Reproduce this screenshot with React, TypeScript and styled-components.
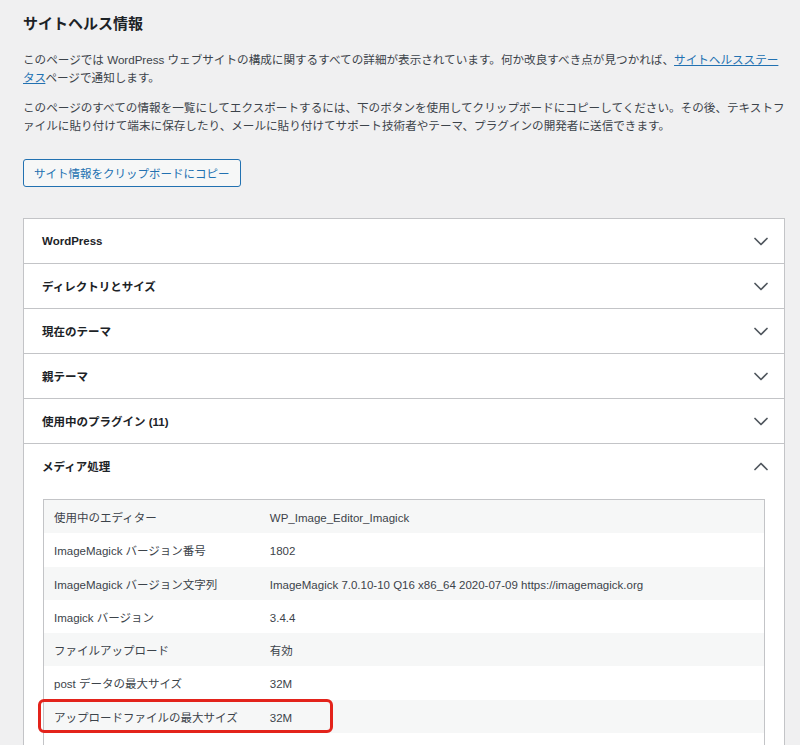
import React from "react";
import styled, { createGlobalStyle } from "styled-components";

const GlobalStyle = createGlobalStyle`
html, body {
  margin: 0;
  padding: 0;
  background: #f0f0f1;
}
body {
  font-family: "Liberation Sans", "Noto Sans CJK JP", sans-serif;
  color: #3c434a;
  font-size: 11.5px;
}
`;

const Page = styled.div`
padding: 14px 15px 0 23px;
box-sizing: border-box;
overflow: hidden;
height: 745px;
`;

const Title = styled.h1`
margin: 0;
font-size: 15px;
line-height: 20px;
font-weight: 600;
color: #1d2327;
`;

const Para = styled.p<{ $gap: number }>`
margin: ${props => props.$gap}px 0 0;
font-size: 11.6px;
line-height: 18px;
color: #3c434a;
`;

const TextLink = styled.a`
color: #2271b1;
text-decoration: underline;
`;

const CopyButton = styled.button`
margin-top: 24px;
height: 28px;
padding: 0 10px;
border: 1px solid #2271b1;
border-radius: 3px;
background: #f6f7f7;
color: #2271b1;
font-family: inherit;
font-size: 11.5px;
cursor: pointer;
`;

const Accordion = styled.div`
margin-top: 31px;
border: 1px solid #c3c4c7;
border-bottom: none;
background: #fff;
`;

const Section = styled.div`
border-bottom: 1px solid #c3c4c7;
`;

const SectionHead = styled.button`
display: flex;
align-items: center;
justify-content: space-between;
width: 100%;
height: 44px;
padding: 0 16px 0 18px;
border: none;
background: #fff;
font-family: inherit;
font-size: 11.5px;
font-weight: 600;
color: #1d2327;
text-align: left;
cursor: pointer;
`;

const SectionBody = styled.div`
padding: 11px 19px 0 19px;
`;

const TableWrap = styled.div`
position: relative;
`;

const InfoTable = styled.table`
width: 100%;
border: 1px solid #c3c4c7;
border-collapse: collapse;
font-size: 11.5px;
color: #3c434a;
`;

const Row = styled.tr<{ $striped: boolean }>`
background: ${props => props.$striped ? "#f6f7f7" : "#fff"};
`;

const Cell = styled.td<{ $label?: boolean }>`
padding: 10px 10px 6px;
line-height: 17.3px;
width: ${props => props.$label ? "30%" : "auto"};
vertical-align: top;
`;

// red annotation box drawn over the upload-size row
const Highlight = styled.div`
position: absolute;
left: -5px;
top: 200px;
width: 295px;
height: 34px;
box-sizing: border-box;
border: 3px solid #e3231b;
border-radius: 6px;
pointer-events: none;
`;

const Chevron = ({ up }: { up?: boolean }) => (
  <svg width="14" height="9" viewBox="0 0 14 9" fill="none">
    <path
      d={up ? "M1 7.5 L7 1.5 L13 7.5" : "M1 1.5 L7 7.5 L13 1.5"}
      stroke="#50575e"
      strokeWidth="1.7"
      strokeLinecap="round"
      strokeLinejoin="round"
    />
  </svg>
);

const sections = [
  "WordPress",
  "ディレクトリとサイズ",
  "現在のテーマ",
  "親テーマ",
  "使用中のプラグイン (11)",
];

const mediaRows: [string, string][] = [
  ["使用中のエディター", "WP_Image_Editor_Imagick"],
  ["ImageMagick バージョン番号", "1802"],
  ["ImageMagick バージョン文字列", "ImageMagick 7.0.10-10 Q16 x86_64 2020-07-09 https://imagemagick.org"],
  ["Imagick バージョン", "3.4.4"],
  ["ファイルアップロード", "有効"],
  ["post データの最大サイズ", "32M"],
  ["アップロードファイルの最大サイズ", "32M"],
  ["有効な最大アップロードサイズ", "32M"],
];

export default function App() {
  return (
    <>
      <GlobalStyle />
      <Page>
        <Title>サイトヘルス情報</Title>
        <Para $gap={17}>
          このページでは WordPress ウェブサイトの構成に関するすべての詳細が表示されています。何か改良すべき点が見つかれば、
          <TextLink href="#">サイトヘルスステー<br />タス</TextLink>ページで通知します。
        </Para>
        <Para $gap={12}>
          このページのすべての情報を一覧にしてエクスポートするには、下のボタンを使用してクリップボードにコピーしてください。その後、テキストフ
          <br />
          ァイルに貼り付けて端末に保存したり、メールに貼り付けてサポート技術者やテーマ、プラグインの開発者に送信できます。
        </Para>
        <CopyButton>サイト情報をクリップボードにコピー</CopyButton>
        <Accordion>
          {sections.map(name => (
            <Section key={name}>
              <SectionHead>
                {name}
                <Chevron />
              </SectionHead>
            </Section>
          ))}
          <Section>
            <SectionHead>
              メディア処理
              <Chevron up />
            </SectionHead>
            <SectionBody>
              <TableWrap>
                <InfoTable>
                  <tbody>
                    {mediaRows.map(([label, value], i) => (
                      <Row key={label} $striped={i % 2 === 0}>
                        <Cell $label>{label}</Cell>
                        <Cell>{value}</Cell>
                      </Row>
                    ))}
                  </tbody>
                </InfoTable>
                <Highlight />
              </TableWrap>
            </SectionBody>
          </Section>
        </Accordion>
      </Page>
    </>
  );
}
